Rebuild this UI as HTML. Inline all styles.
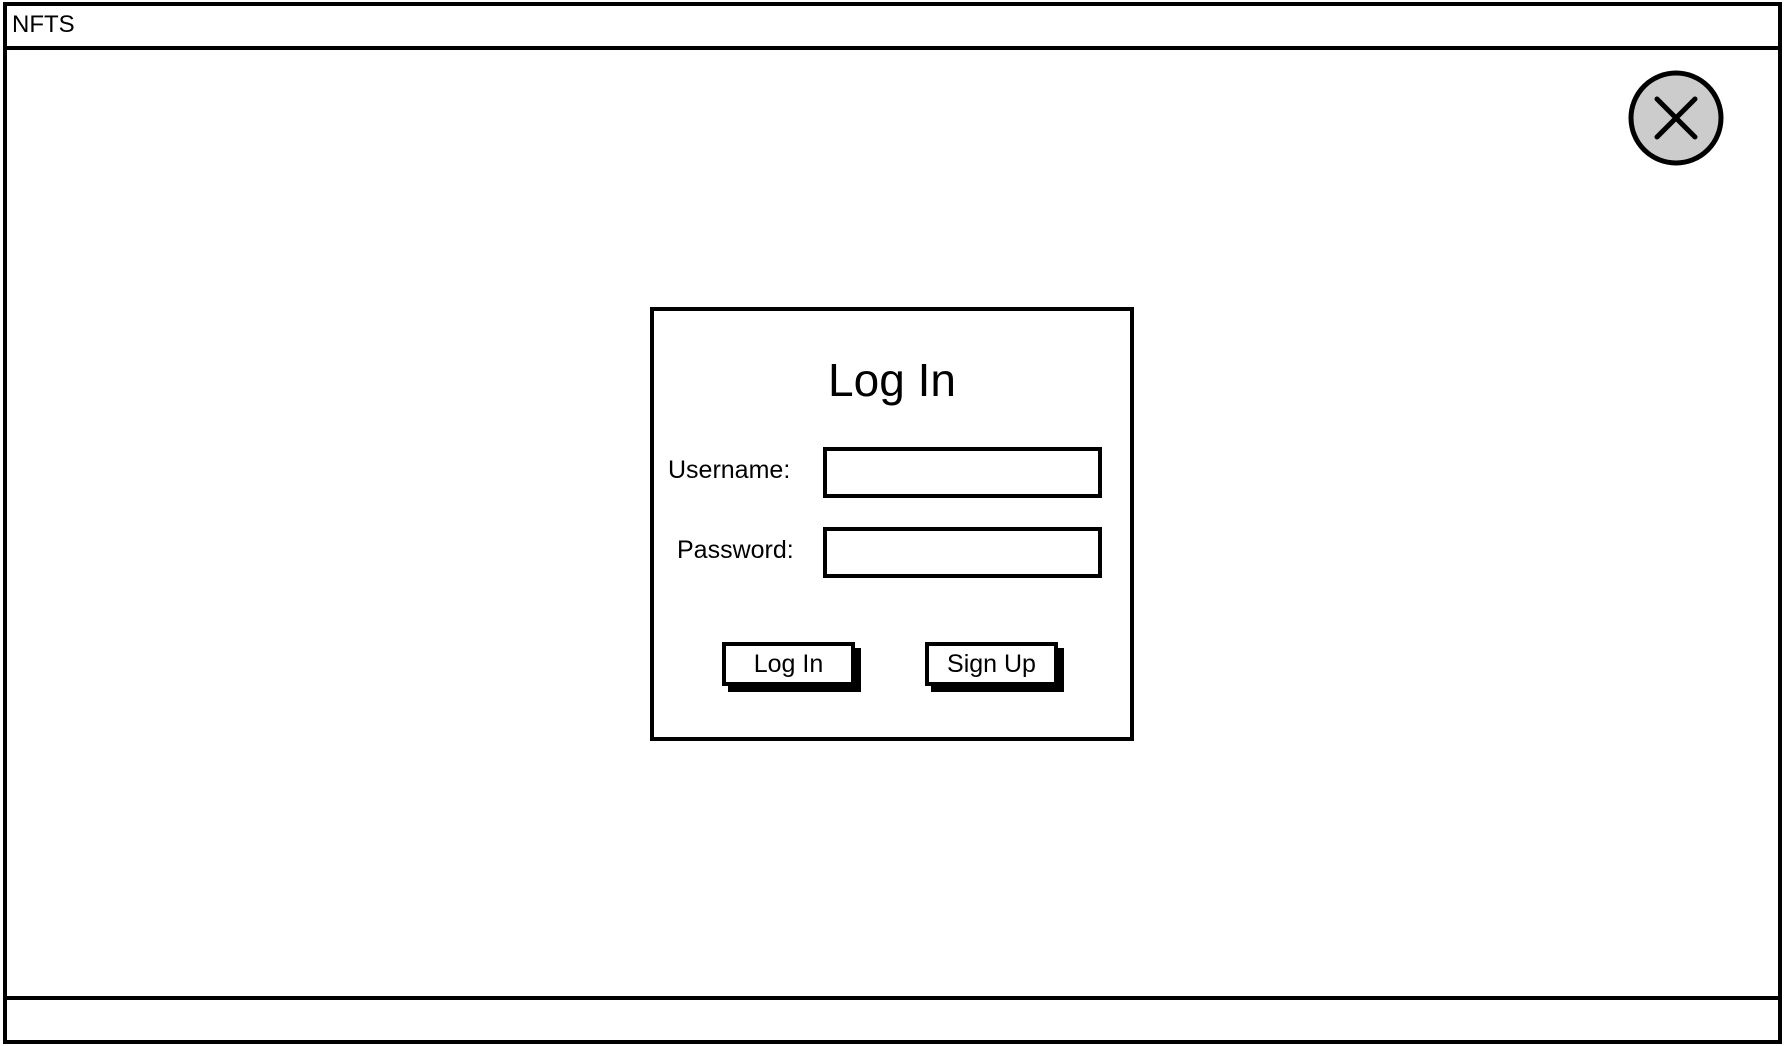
<!DOCTYPE html>
<html><head><meta charset="utf-8"><style>
html,body{margin:0;padding:0;background:#fff;}
body{width:1784px;height:1046px;position:relative;overflow:hidden;font-family:"Liberation Sans",sans-serif;color:#000;}
.a{position:absolute;box-sizing:border-box;}
</style></head><body>
<div class="a" style="left:3px;top:2px;width:1779px;height:1042px;border:4px solid #000;"></div>
<div class="a" style="left:3px;top:46px;width:1779px;height:4px;background:#000;"></div>
<div class="a" style="left:3px;top:996px;width:1779px;height:4px;background:#000;"></div>
<div class="a" style="left:12px;top:11px;font-size:24px;line-height:28px;">NFTS</div>
<svg class="a" style="left:1626px;top:68px" width="100" height="100" viewBox="0 0 100 100">
<circle cx="50" cy="50" r="45" fill="#ccc" stroke="#000" stroke-width="5"/>
<path d="M31 31 L69 69 M69 31 L31 69" stroke="#000" stroke-width="5" stroke-linecap="round"/>
</svg>
<div class="a" style="left:650px;top:307px;width:484px;height:434px;border:4px solid #000;"></div>
<div class="a" style="left:650px;top:352px;width:484px;text-align:center;font-size:46px;line-height:56px;">Log In</div>
<div class="a" style="left:668px;top:455px;font-size:25px;line-height:30px;">Username:</div>
<div class="a" style="left:677px;top:535px;font-size:25px;line-height:30px;">Password:</div>
<div class="a" style="left:823px;top:447px;width:279px;height:51px;border:4px solid #000;"></div>
<div class="a" style="left:823px;top:527px;width:279px;height:51px;border:4px solid #000;"></div>
<div class="a" style="left:728px;top:648px;width:133px;height:44px;background:#000;"></div>
<div class="a" style="left:722px;top:642px;width:133px;height:44px;border:4px solid #000;background:#fff;text-align:center;font-size:25px;line-height:36px;">Log In</div>
<div class="a" style="left:931px;top:648px;width:133px;height:44px;background:#000;"></div>
<div class="a" style="left:925px;top:642px;width:133px;height:44px;border:4px solid #000;background:#fff;text-align:center;font-size:25px;line-height:36px;">Sign Up</div>
</body></html>
